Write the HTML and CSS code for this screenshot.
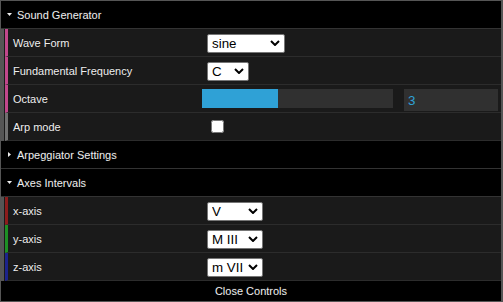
FILE: index.html
```html
<!DOCTYPE html>
<html>
<head>
    <link rel="stylesheet" href="styles.css">
</head>
<body>
    <div class="gui">
        <div class="title"><svg class="caret" width="5" height="3" viewBox="0 0 5 3"><path d="M0 0 H5 L2.5 3 Z" fill="#eee"/></svg>Sound Generator</div>
        <div class="rows">
            <div class="row tone">
                <span class="name">Wave Form</span>
                <span class="pick wave">
                    <select><option>sine</option><option>square</option><option>sawtooth</option><option>triangle</option></select>
                    <svg width="10" height="6" viewBox="0 0 10 6"><path d="M1 1 L5 5 L9 1" stroke="#000" stroke-width="2" fill="none"/></svg>
                </span>
            </div>
            <div class="row tone">
                <span class="name">Fundamental Frequency</span>
                <span class="pick note">
                    <select><option>C</option><option>D</option><option>E</option><option>F</option><option>G</option><option>A</option><option>B</option></select>
                    <svg width="10" height="6" viewBox="0 0 10 6"><path d="M1 1 L5 5 L9 1" stroke="#000" stroke-width="2" fill="none"/></svg>
                </span>
            </div>
            <div class="row tone">
                <span class="name">Octave</span>
                <div class="number">
                    <div class="slider"><div class="fill" style="width: 40%;"></div></div>
                    <input type="text" value="3">
                </div>
            </div>
            <div class="row flag">
                <span class="name">Arp mode</span>
                <input type="checkbox" class="check">
            </div>
        </div>
        <div class="title"><svg class="caret" width="5" height="5" viewBox="0 0 5 5"><path d="M1 0 V5 L4 2.5 Z" fill="#eee"/></svg>Arpeggiator Settings</div>
        <div class="title"><svg class="caret" width="5" height="3" viewBox="0 0 5 3"><path d="M0 0 H5 L2.5 3 Z" fill="#eee"/></svg>Axes Intervals</div>
        <div class="rows">
            <div class="row axis-x">
                <span class="name">x-axis</span>
                <span class="pick interval">
                    <select><option>V</option><option>M III</option><option>m VII</option></select>
                    <svg width="10" height="6" viewBox="0 0 10 6"><path d="M1 1 L5 5 L9 1" stroke="#000" stroke-width="2" fill="none"/></svg>
                </span>
            </div>
            <div class="row axis-y">
                <span class="name">y-axis</span>
                <span class="pick interval">
                    <select><option>M III</option><option>V</option><option>m VII</option></select>
                    <svg width="10" height="6" viewBox="0 0 10 6"><path d="M1 1 L5 5 L9 1" stroke="#000" stroke-width="2" fill="none"/></svg>
                </span>
            </div>
            <div class="row axis-z">
                <span class="name">z-axis</span>
                <span class="pick interval">
                    <select><option>m VII</option><option>V</option><option>M III</option></select>
                    <svg width="10" height="6" viewBox="0 0 10 6"><path d="M1 1 L5 5 L9 1" stroke="#000" stroke-width="2" fill="none"/></svg>
                </span>
            </div>
        </div>
        <div class="close">Close Controls</div>
    </div>
</body>
</html>
```

FILE: styles.css
```css
body {
    margin: 0;
    background: #555;
    font-family: "Liberation Sans", Arial, sans-serif;
    font-size: 11px;
    color: #eee;
    text-shadow: 0 -1px 0 #111;
}
.gui {
    width: 500px;
    margin: 1px 0 0 1px;
}
.title {
    height: 27px;
    display: flex;
    align-items: center;
    background: #000;
    border-bottom: 1px solid #333;
}
.caret {
    margin: 0 5px 0 6px;
}
.rows {
    margin-left: 3px;
    padding-left: 1px;
    background: #1a1a1a;
}
.row {
    height: 27px;
    display: flex;
    align-items: center;
    padding: 0 3px 0 5px;
    background: #1a1a1a;
    border-left: 3px solid #666;
    border-bottom: 1px solid #2c2c2c;
}
.row.tone {
    border-left-color: #c2478c;
}
.row.flag {
    border-left-color: #707070;
}
.row.axis-x {
    border-left-color: #8c1c1c;
}
.row.axis-y {
    border-left-color: #1d8f24;
}
.row.axis-z {
    border-left-color: #1c238c;
}
.name {
    width: 189px;
    flex-shrink: 0;
}
.pick {
    display: inline-flex;
    align-items: center;
    margin-left: 5px;
    margin-top: 1px;
}
.pick select {
    appearance: none;
    -webkit-appearance: none;
    height: 19px;
    padding: 0 0 0 4px;
    margin: 0;
    background: #fff;
    border: 1px solid #767676;
    border-radius: 2px;
    color: #000;
    font-family: "Liberation Sans", Arial, sans-serif;
    font-size: 13.33px;
    text-shadow: none;
    outline: none;
}
.pick svg {
    margin-left: -15px;
    pointer-events: none;
}
.pick.wave select {
    width: 78px;
}
.pick.note select {
    width: 42px;
}
.pick.interval select {
    width: 56px;
}
.number {
    display: flex;
    align-items: flex-start;
    align-self: flex-start;
    margin-top: 4px;
}
.slider {
    width: 191px;
    height: 19px;
    background: #303030;
}
.fill {
    height: 100%;
    background: #2fa1d6;
}
.number input {
    width: 94px;
    height: 22px;
    margin: 0 0 0 11px;
    padding: 0 0 0 4px;
    box-sizing: border-box;
    border: none;
    outline: none;
    background: #303030;
    color: #2fa1d6;
    font-family: "Liberation Sans", Arial, sans-serif;
    font-size: 13.33px;
}
.check {
    width: 13px;
    height: 13px;
    margin: 0 0 0 9px;
}
.close {
    height: 20px;
    line-height: 20px;
    text-align: center;
    background: #000;
}
```
